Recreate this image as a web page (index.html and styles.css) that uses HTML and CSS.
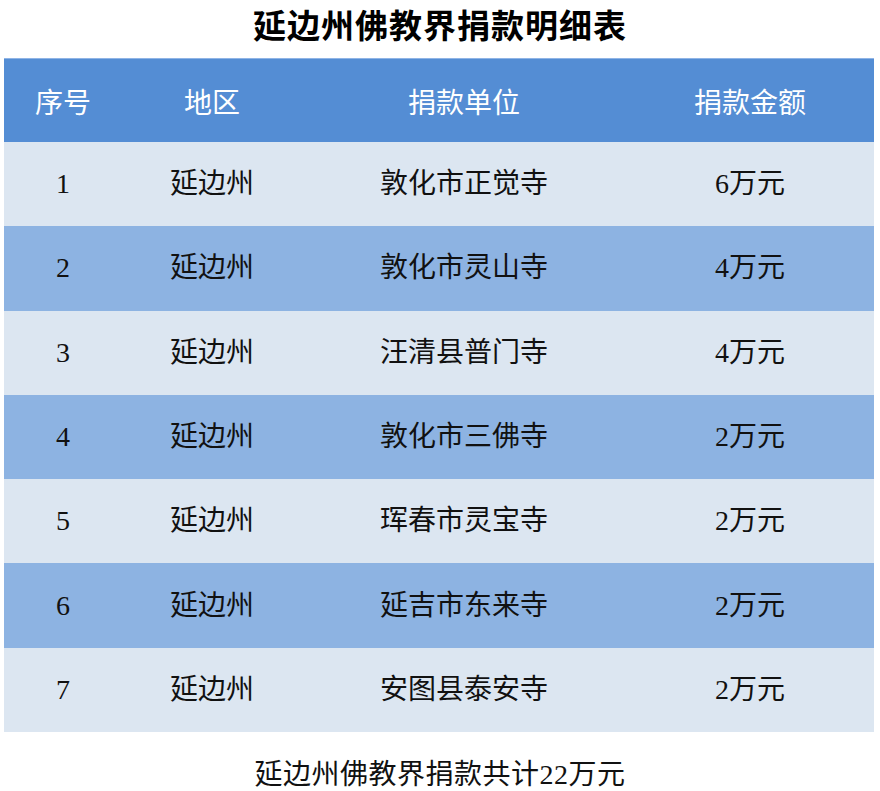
FILE: index.html
```html
<!DOCTYPE html>
<html lang="zh-CN">
<head>
<meta charset="utf-8">
<title>延边州佛教界捐款明细表</title>
<link rel="stylesheet" href="styles.css">
</head>
<body>
<h1 class="title">延边州佛教界捐款明细表</h1>
<div class="table">
  <div class="row head">
    <div class="cell">序号</div><div class="cell">地区</div><div class="cell">捐款单位</div><div class="cell">捐款金额</div>
  </div>
  <div class="row light">
    <div class="cell">1</div><div class="cell">延边州</div><div class="cell">敦化市正觉寺</div><div class="cell">6万元</div>
  </div>
  <div class="row dark">
    <div class="cell">2</div><div class="cell">延边州</div><div class="cell">敦化市灵山寺</div><div class="cell">4万元</div>
  </div>
  <div class="row light">
    <div class="cell">3</div><div class="cell">延边州</div><div class="cell">汪清县普门寺</div><div class="cell">4万元</div>
  </div>
  <div class="row dark">
    <div class="cell">4</div><div class="cell">延边州</div><div class="cell">敦化市三佛寺</div><div class="cell">2万元</div>
  </div>
  <div class="row light">
    <div class="cell">5</div><div class="cell">延边州</div><div class="cell">珲春市灵宝寺</div><div class="cell">2万元</div>
  </div>
  <div class="row dark">
    <div class="cell">6</div><div class="cell">延边州</div><div class="cell">延吉市东来寺</div><div class="cell">2万元</div>
  </div>
  <div class="row light">
    <div class="cell">7</div><div class="cell">延边州</div><div class="cell">安图县泰安寺</div><div class="cell">2万元</div>
  </div>
</div>
<p class="total">延边州佛教界捐款共计22万元</p>
</body>
</html>
```
FILE: styles.css
```css
html, body {
  margin: 0;
  padding: 0;
  background: #ffffff;
}
body {
  width: 880px;
  font-family: "Liberation Serif", "Noto Sans CJK SC", serif;
  color: #111;
}
.title {
  margin: 0;
  height: 58px;
  line-height: 48px;
  text-align: center;
  font-family: "Noto Sans CJK SC", sans-serif;
  font-weight: 700;
  font-size: 33px;
  letter-spacing: 1px;
  color: #000;
}
.table {
  margin: 0 6px 0 4px;
  width: 870px;
}
.row {
  display: grid;
  grid-template-columns: 118px 180px 324px 248px;
  align-items: center;
  height: 84.3px;
}
.cell {
  text-align: center;
  font-size: 28px;
  line-height: 34px;
  font-weight: 400;
}
.head {
  height: 84px;
  background: #548dd4;
  border-top: 1px solid #8fb4e6;
  box-sizing: border-box;
}
.head .cell {
  font-family: "Noto Sans CJK SC", sans-serif;
  font-size: 28px;
  font-weight: 400;
  color: #ffffff;
}
.light {
  background: #dce6f1;
}
.dark {
  background: #8db3e2;
}
.total {
  margin: 0;
  padding-top: 26px;
  line-height: 34px;
  text-align: center;
  font-size: 28px;
  letter-spacing: 0.5px;
  font-weight: 400;
  color: #111;
}
```
